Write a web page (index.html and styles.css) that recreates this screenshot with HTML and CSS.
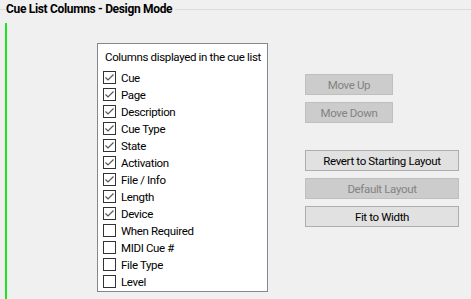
FILE: index.html
```html
<!DOCTYPE html>
<html lang="en">
<head>
    <link rel="stylesheet" href="styles.css">
    <meta charset="UTF-8">
    <title>Cue List Columns</title>
</head>
<body>
<div class="group-title"><span>Cue List Columns - Design Mode</span></div>
<div class="group-body">
    <div class="column-list">
        <div class="list-header">Columns displayed in the cue list</div>
        <label class="item"><span class="check on"><svg width="11" height="11" viewBox="0 0 11 11"><polyline points="1.5,5.5 4,8 9.5,2.5" fill="none" stroke="#555" stroke-width="1.2"/></svg></span>Cue</label>
        <label class="item"><span class="check on"><svg width="11" height="11" viewBox="0 0 11 11"><polyline points="1.5,5.5 4,8 9.5,2.5" fill="none" stroke="#555" stroke-width="1.2"/></svg></span>Page</label>
        <label class="item"><span class="check on"><svg width="11" height="11" viewBox="0 0 11 11"><polyline points="1.5,5.5 4,8 9.5,2.5" fill="none" stroke="#555" stroke-width="1.2"/></svg></span>Description</label>
        <label class="item"><span class="check on"><svg width="11" height="11" viewBox="0 0 11 11"><polyline points="1.5,5.5 4,8 9.5,2.5" fill="none" stroke="#555" stroke-width="1.2"/></svg></span>Cue Type</label>
        <label class="item"><span class="check on"><svg width="11" height="11" viewBox="0 0 11 11"><polyline points="1.5,5.5 4,8 9.5,2.5" fill="none" stroke="#555" stroke-width="1.2"/></svg></span>State</label>
        <label class="item"><span class="check on"><svg width="11" height="11" viewBox="0 0 11 11"><polyline points="1.5,5.5 4,8 9.5,2.5" fill="none" stroke="#555" stroke-width="1.2"/></svg></span>Activation</label>
        <label class="item"><span class="check on"><svg width="11" height="11" viewBox="0 0 11 11"><polyline points="1.5,5.5 4,8 9.5,2.5" fill="none" stroke="#555" stroke-width="1.2"/></svg></span>File / Info</label>
        <label class="item"><span class="check on"><svg width="11" height="11" viewBox="0 0 11 11"><polyline points="1.5,5.5 4,8 9.5,2.5" fill="none" stroke="#555" stroke-width="1.2"/></svg></span>Length</label>
        <label class="item"><span class="check on"><svg width="11" height="11" viewBox="0 0 11 11"><polyline points="1.5,5.5 4,8 9.5,2.5" fill="none" stroke="#555" stroke-width="1.2"/></svg></span>Device</label>
        <label class="item"><span class="check"></span>When Required</label>
        <label class="item"><span class="check"></span>MIDI Cue #</label>
        <label class="item"><span class="check"></span>File Type</label>
        <label class="item"><span class="check"></span>Level</label>
    </div>
    <div class="buttons">
        <div class="btn-group">
            <button class="btn small" disabled>Move Up</button>
            <button class="btn small" disabled>Move Down</button>
        </div>
        <div class="btn-group lower">
            <button class="btn wide">Revert to Starting Layout</button>
            <button class="btn wide" disabled>Default Layout</button>
            <button class="btn wide">Fit to Width</button>
        </div>
    </div>
</div>
</body>
</html>
```

FILE: styles.css
```css
body {
    margin: 0;
    background: #f0f0f0;
    font-family: Roboto, sans-serif;
    font-size: 11.5px;
    letter-spacing: -0.35px;
    color: #000;
    height: 299px;
    overflow: hidden;
}

.group-title {
    position: relative;
    height: 20px;
    padding-left: 6px;
}

.group-title::before {
    content: "";
    position: absolute;
    left: 0;
    right: 0;
    top: 9px;
    border-top: 1px solid #dcdcdc;
}

.group-title span {
    position: relative;
    background: #f0f0f0;
    font-weight: bold;
    font-size: 12px;
    letter-spacing: -0.33px;
    line-height: 17px;
    padding-right: 3px;
    top: 1px;
}

.group-body {
    display: flex;
    margin: 3px 0 0 5px;
    border-left: 2px solid #1ee61e;
    height: 276px;
    padding: 20px 0 0 90px;
    box-sizing: border-box;
}

.column-list {
    width: 171px;
    height: 249px;
    box-sizing: border-box;
    background: #fff;
    border: 1px solid #828790;
    padding: 5px 5px 0 5px;
    white-space: nowrap;
}

.list-header {
    line-height: 17px;
    padding-left: 2px;
    margin-bottom: 3px;
}

.item {
    display: flex;
    align-items: center;
    height: 17px;
    gap: 5px;
}

.check {
    display: flex;
    align-items: center;
    justify-content: center;
    width: 13px;
    height: 13px;
    box-sizing: border-box;
    border: 1px solid #333;
    background: #fff;
}

.buttons {
    margin-left: 37px;
    padding-top: 31px;
}

.btn-group {
    display: flex;
    flex-direction: column;
    gap: 7px;
}

.btn-group.lower {
    margin-top: 27px;
}

.btn {
    font-family: Roboto, sans-serif;
    font-size: 11.5px;
    letter-spacing: -0.35px;
    height: 21px;
    padding: 0;
    background: #e1e1e1;
    border: 1px solid #adadad;
    color: #000;
}

.btn:disabled {
    background: #cccccc;
    border-color: #bfbfbf;
    color: #838383;
}

.small {
    width: 88px;
}

.wide {
    width: 154px;
}
```
